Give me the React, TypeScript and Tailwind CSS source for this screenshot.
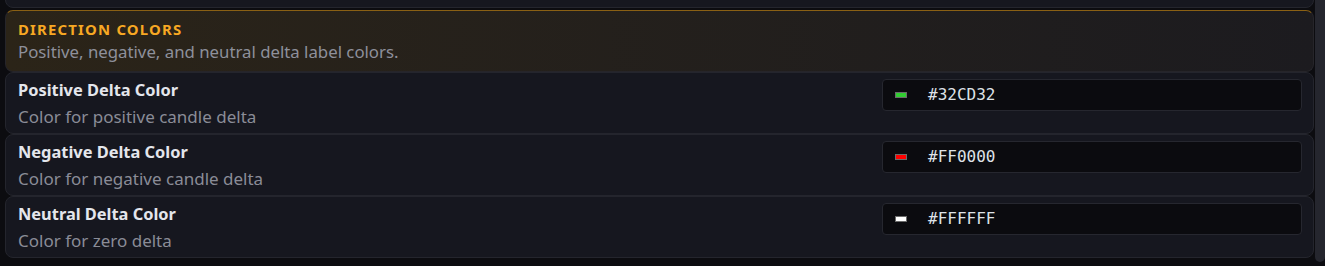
import React from 'react'

interface ColorRowProps {
  title: string
  desc: string
  value: string
  swatch: string
}

const ColorRow = ({ title, desc, value, swatch }: ColorRowProps) => {
  return (
    <div className="flex items-start justify-between rounded-lg border border-[#24252d] bg-[#16171f] pl-[12px] pr-[11px] pt-[6px] pb-[5px]">
      <div className="flex flex-col gap-[5px]">
        <span className="text-[16.4px] leading-[22px] font-bold text-[#e4e6ec]">{title}</span>
        <span className="text-[17px] leading-[22px] text-[#8a8c97]">{desc}</span>
      </div>
      <div className="flex h-[32px] w-[420px] items-center rounded-[4px] border border-[#26272f] bg-[#0b0b0f] pl-[12px]">
        <span
          className="h-[6px] w-[12px] border border-[#6b6b6b]"
          style={{ backgroundColor: swatch }}
        />
        <span className="ml-[21px] font-['DejaVu_Sans_Mono',monospace] text-[16px] text-[#dfe2e8]">
          {value}
        </span>
      </div>
    </div>
  )
}

const rows = [
  { title: 'Positive Delta Color', desc: 'Color for positive candle delta', value: '#32CD32', swatch: '#32CD32' },
  { title: 'Negative Delta Color', desc: 'Color for negative candle delta', value: '#FF0000', swatch: '#FF0000' },
  { title: 'Neutral Delta Color', desc: 'Color for zero delta', value: '#FFFFFF', swatch: '#FFFFFF' },
]

export default function App() {
  return (
    <div className="flex h-[266px] w-full overflow-hidden bg-[#0c0c10] font-['Noto_Sans',sans-serif]">
      <div className="flex-1 pl-[5px] pr-[1px]">
        {/* previous row, scrolled mostly out of view */}
        <div className="mt-[-54px] flex h-[62px] flex-col justify-end rounded-lg border border-[#24252d] bg-[#16171f] pl-[12px] pb-[8px]">
          <span className="text-[17px] leading-[22px] text-[#8a8c97]">Label gutter width</span>
        </div>

        {/* Section header */}
        <div className="mt-[2px] rounded-lg border border-[#26252a] border-t-[#8a6014] bg-linear-to-r from-[#2b2418] to-[#1c1b1f] pl-[12px] pt-[9px] pb-[8px]">
          <div className="text-[14.9px] leading-[18px] font-bold tracking-[0.08em] text-[#f7a823]">
            DIRECTION COLORS
          </div>
          <div className="mt-[3px] text-[16.8px] leading-[22px] text-[#8e909b]">
            Positive, negative, and neutral delta label colors.
          </div>
        </div>

        {/* Rows */}
        {rows.map((r) => (
          <ColorRow key={r.title} {...r} />
        ))}
      </div>

      {/* scrollbar */}
      <div className="w-[10px] bg-[#0c0c10]">
        <div className="h-[262px] rounded-b-[6px] bg-[#25262e]" />
      </div>
    </div>
  )
}
